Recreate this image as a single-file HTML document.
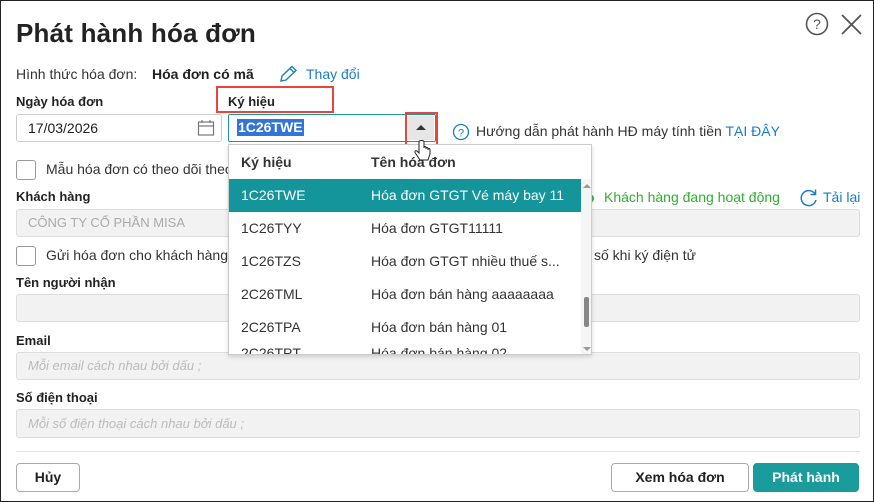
<!DOCTYPE html>
<html><head><meta charset="utf-8"><style>
*{box-sizing:border-box;margin:0;padding:0}
body{width:874px;height:502px;background:#fff;font-family:"Liberation Sans","DejaVu Sans",sans-serif;color:#212121;position:relative;overflow:hidden;font-size:14px}
.frame{position:absolute;left:0;top:0;width:874px;height:502px;border:1px solid #222;pointer-events:none;z-index:20}
.a{position:absolute;white-space:nowrap}
.lbl{font-size:13px;font-weight:bold;color:#222}
.inp{position:absolute;border:1px solid #ddd;border-radius:3px;background:#f2f2f2}
.ph{font-style:italic;color:#bbb;font-size:13px}
.cb{position:absolute;width:20px;height:20px;border:1px solid #999;border-radius:3px;background:#fff}
.btn{position:absolute;border:1px solid #aaa;border-radius:4px;background:#fff;font-weight:bold;font-size:14px;text-align:center;line-height:26px}
.red{position:absolute;border:2px solid #e8453c}
.dd{position:absolute;left:228px;top:144px;width:364px;height:211px;border:1px solid #ccc;background:#fff;overflow:hidden;z-index:10;box-shadow:0 2px 4px rgba(0,0,0,.15)}
.row{position:absolute;left:0;width:352px;height:33px;font-size:14px;color:#333}
.row span{position:absolute;top:8px}
</style></head><body>
<div class="frame"></div>
<div class="a" style="left:16px;top:18px;font-size:26px;font-weight:600;color:#222;letter-spacing:0.2px">Phát hành hóa đơn</div>
<svg class="a" style="left:805px;top:12px" width="60" height="26" viewBox="0 0 60 26"><circle cx="12" cy="12" r="10.5" fill="none" stroke="#555" stroke-width="1.6"/><text x="12" y="17" font-size="14" text-anchor="middle" fill="#555" font-family="Liberation Sans">?</text><path d="M37 3 L56 22 M56 3 L37 22" stroke="#555" stroke-width="1.8"/></svg>

<div class="a" style="left:16px;top:66px;font-size:14px;color:#333">Hình thức hóa đơn:</div>
<div class="a" style="left:152px;top:66px;font-size:14px;font-weight:bold">Hóa đơn có mã</div>
<svg class="a" style="left:278px;top:65px" width="20" height="18" viewBox="0 0 20 18"><path d="M3 16 L4 11 L14 1.5 L18 5.5 L8 15 Z M12 3.5 L16 7.5" fill="none" stroke="#1a7dc4" stroke-width="1.4"/></svg>
<div class="a" style="left:306px;top:66px;font-size:14px;color:#1a7dc4">Thay đổi</div>

<div class="a lbl" style="left:16px;top:94px">Ngày hóa đơn</div>
<div class="a lbl" style="left:228px;top:94px">Ký hiệu</div>
<div class="red" style="left:216px;top:86px;width:118px;height:27px"></div>

<div class="a" style="left:16px;top:114px;width:206px;height:28px;border:1px solid #ccc;border-radius:3px"></div>
<div class="a" style="left:28px;top:120px;font-size:14px">17/03/2026</div>
<svg class="a" style="left:197px;top:119px" width="18" height="18" viewBox="0 0 18 18"><rect x="1.5" y="3" width="15" height="13" fill="none" stroke="#777" stroke-width="1.2"/><path d="M1.5 7 H16.5 M5 1 V4 M13 1 V4" stroke="#777" stroke-width="1.2"/></svg>

<div class="a" style="left:228px;top:114px;width:208px;height:28px;border:1px solid #1f9898;border-radius:2px"></div>
<div class="a" style="left:237px;top:119px;font-size:14px;font-weight:bold;color:#fff;background:#3274d9;padding:0 1px;line-height:17px">1C26TWE</div>
<div class="a" style="left:408px;top:116px;width:26px;height:24px;background:#e6e6e6"></div>
<svg class="a" style="left:415px;top:123px" width="12" height="8"><path d="M1 7 L6 2 L11 7 Z" fill="#333"/></svg>
<div class="red" style="left:405px;top:112px;width:33px;height:34px"></div>
<svg class="a" style="left:414px;top:140px;z-index:12" width="18" height="22" viewBox="0 0 18 22"><path d="M5 2 V13 L3 11 C1 10 0 12 2 14 L6 20 H14 L16 14 V10 C16 8 14 8 14 10 V9 C14 7 12 7 12 9 V8 C12 6 10 6 10 8 V2 C10 0 5 0 5 2 Z" fill="#fff" stroke="#222" stroke-width="1"/></svg>

<svg class="a" style="left:452px;top:123px" width="18" height="18"><circle cx="9" cy="9" r="7.5" fill="none" stroke="#1a7dc4" stroke-width="1.3"/><text x="9" y="13.5" font-size="11" text-anchor="middle" fill="#1a7dc4" font-family="Liberation Sans">?</text></svg>
<div class="a" style="left:476px;top:123px;font-size:14px;color:#333">Hướng dẫn phát hành HĐ máy tính tiền <span style="color:#1a7dc4">TẠI ĐÂY</span></div>

<div class="cb" style="left:16px;top:160px"></div>
<div class="a" style="left:46px;top:161px;font-size:14px;color:#333">Mẫu hóa đơn có theo dõi theo</div>

<div class="a lbl" style="left:16px;top:189px">Khách hàng</div>
<div class="a" style="left:588px;top:194px;width:6px;height:9px;border-radius:0 5px 5px 0;background:#3cb43c"></div>
<div class="a" style="left:604px;top:189px;font-size:14px;color:#2fae2f">Khách hàng đang hoạt động</div>
<svg class="a" style="left:799px;top:188px" width="20" height="20" viewBox="0 0 20 20"><path d="M16 6 A7.5 7.5 0 1 0 17 12" fill="none" stroke="#1a7dc4" stroke-width="1.5"/><path d="M16.5 1.5 V6.5 H11.5" fill="none" stroke="#1a7dc4" stroke-width="1.5"/></svg>
<div class="a" style="left:823px;top:189px;font-size:14px;color:#1a7dc4">Tải lại</div>
<div class="inp" style="left:16px;top:209px;width:844px;height:28px"></div>
<div class="a" style="left:28px;top:215px;font-size:13px;color:#aaa">CÔNG TY CỔ PHẦN MISA</div>

<div class="cb" style="left:16px;top:246px"></div>
<div class="a" style="left:46px;top:247px;font-size:14px;color:#333">Gửi hóa đơn cho khách hàng</div>
<div class="a" style="left:594px;top:247px;font-size:14px;color:#333">số khi ký điện tử</div>

<div class="a lbl" style="left:16px;top:275px">Tên người nhận</div>
<div class="inp" style="left:16px;top:294px;width:844px;height:28px"></div>
<div class="a lbl" style="left:16px;top:333px">Email</div>
<div class="inp" style="left:16px;top:352px;width:844px;height:28px"></div>
<div class="a ph" style="left:28px;top:358px">Mỗi email cách nhau bởi dấu ;</div>
<div class="a lbl" style="left:16px;top:390px">Số điện thoại</div>
<div class="inp" style="left:16px;top:409px;width:844px;height:29px"></div>
<div class="a ph" style="left:28px;top:416px">Mỗi số điện thoại cách nhau bởi dấu ;</div>

<div class="a" style="left:16px;top:451px;width:844px;height:1px;background:#e2e2e2"></div>
<div class="btn" style="left:16px;top:463px;width:64px;height:29px">Hủy</div>
<div class="btn" style="left:611px;top:463px;width:138px;height:29px">Xem hóa đơn</div>
<div class="btn" style="left:753px;top:463px;width:106px;height:29px;background:#1a9c9c;border-color:#1a9c9c;color:#fff">Phát hành</div>

<div class="dd">
<div class="row" style="top:0;height:34px;font-weight:bold"><span style="left:12px;top:9px">Ký hiệu</span><span style="left:142px;top:9px">Tên hóa đơn</span></div>
<div class="row" style="top:34px;background:#13959b;color:#fff"><span style="left:12px">1C26TWE</span><span style="left:142px">Hóa đơn GTGT Vé máy bay 11</span></div>
<div class="row" style="top:67px"><span style="left:12px">1C26TYY</span><span style="left:142px">Hóa đơn GTGT11111</span></div>
<div class="row" style="top:100px"><span style="left:12px">1C26TZS</span><span style="left:142px">Hóa đơn GTGT nhiều thuế s...</span></div>
<div class="row" style="top:133px"><span style="left:12px">2C26TML</span><span style="left:142px">Hóa đơn bán hàng aaaaaaaa</span></div>
<div class="row" style="top:166px"><span style="left:12px">2C26TPA</span><span style="left:142px">Hóa đơn bán hàng 01</span></div>
<div class="row" style="top:192px"><span style="left:12px">2C26TPT</span><span style="left:142px">Hóa đơn bán hàng 02</span></div>
<div class="a" style="left:352px;top:34px;width:11px;height:177px;background:#f5f5f5"></div>
<svg class="a" style="left:354px;top:38px" width="8" height="6"><path d="M0 5 L4 1 L8 5Z" fill="#999"/></svg>
<div class="a" style="left:355px;top:152px;width:5px;height:30px;background:#888;border-radius:2px"></div>
<svg class="a" style="left:354px;top:201px" width="8" height="6"><path d="M0 1 L4 5 L8 1Z" fill="#999"/></svg>
</div>
</body></html>
